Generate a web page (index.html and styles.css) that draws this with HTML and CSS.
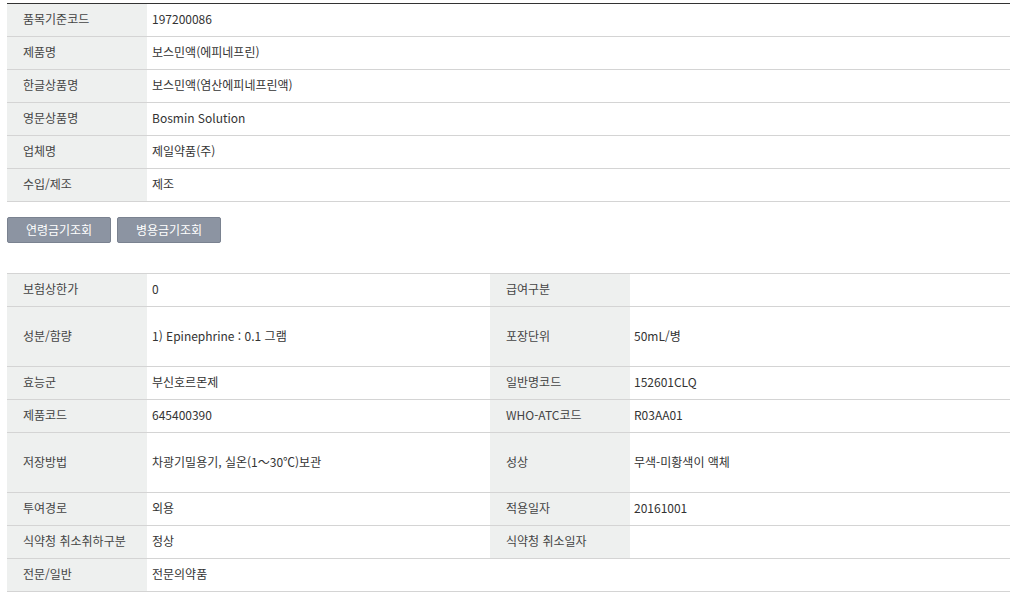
FILE: index.html
```html
<!DOCTYPE html>
<html lang="ko">
<head>
<meta charset="utf-8">
<title>의약품 상세</title>
<link rel="stylesheet" href="styles.css">
</head>
<body>
<div class="page">
  <table class="info info-top">
    <colgroup><col class="c-label"><col></colgroup>
    <tr><th>품목기준코드</th><td>197200086</td></tr>
    <tr><th>제품명</th><td>보스민액(에피네프린)</td></tr>
    <tr><th>한글상품명</th><td>보스민액(염산에피네프린액)</td></tr>
    <tr><th>영문상품명</th><td>Bosmin Solution</td></tr>
    <tr><th>업체명</th><td>제일약품(주)</td></tr>
    <tr><th>수입/제조</th><td>제조</td></tr>
  </table>

  <div class="buttons">
    <button class="btn" type="button">연령금기조회</button>
    <button class="btn" type="button">병용금기조회</button>
  </div>

  <table class="info info-bottom">
    <colgroup><col class="c-label"><col class="c-val1"><col class="c-label"><col></colgroup>
    <tr><th>보험상한가</th><td>0</td><th>급여구분</th><td></td></tr>
    <tr class="tall"><th>성분/함량</th><td>1) Epinephrine : 0.1 그램</td><th>포장단위</th><td>50mL/병</td></tr>
    <tr><th>효능군</th><td>부신호르몬제</td><th>일반명코드</th><td>152601CLQ</td></tr>
    <tr><th>제품코드</th><td>645400390</td><th>WHO-ATC코드</th><td>R03AA01</td></tr>
    <tr class="tall"><th>저장방법</th><td>차광기밀용기, 실온(1～30℃)보관</td><th>성상</th><td>무색-미황색이 액체</td></tr>
    <tr><th>투여경로</th><td>외용</td><th>적용일자</th><td>20161001</td></tr>
    <tr><th>식약청 취소취하구분</th><td>정상</td><th>식약청 취소일자</th><td></td></tr>
    <tr><th>전문/일반</th><td colspan="3">전문의약품</td></tr>
  </table>
</div>
</body>
</html>
```

FILE: styles.css
```css
html, body {
  margin: 0;
  padding: 0;
  background: #fff;
}

body {
  font-family: "Noto Sans CJK KR", "Noto Sans", sans-serif;
  font-size: 12px;
  color: #333;
}

.page {
  padding: 3px 0 0 7px;
}

.info {
  width: 1003px;
  border-collapse: collapse;
  table-layout: fixed;
}

.info-top {
  border-top: 1px solid #333;
}

.info-bottom {
  border-top: 1px solid #d4d4d4;
}

.c-label {
  width: 140px;
}

.c-val1 {
  width: 343px;
}

.info th,
.info td {
  box-sizing: border-box;
  height: 33px;
  padding: 0 0 2px;
  border-bottom: 1px solid #d4d4d4;
  font-weight: normal;
  text-align: left;
  vertical-align: middle;
  line-height: 16px;
  white-space: nowrap;
}

.info th {
  background: #eef0ef;
  color: #444;
  padding-left: 16px;
}

.info td {
  padding-left: 5px;
  color: #333;
}

.info-bottom td:nth-child(4) {
  padding-left: 4px;
}

.info tr.tall th,
.info tr.tall td {
  height: 60px;
}

.buttons {
  display: flex;
  gap: 6px;
  margin: 15px 0 30px;
}

.btn {
  box-sizing: border-box;
  width: 104px;
  height: 26px;
  padding: 0 0 1px;
  background: #8c94a2;
  border: 1px solid #7a8290;
  border-radius: 2px;
  color: #fff;
  font-family: "Noto Sans CJK KR", "Noto Sans", sans-serif;
  font-size: 12px;
  line-height: 23px;
  cursor: pointer;
}
```
